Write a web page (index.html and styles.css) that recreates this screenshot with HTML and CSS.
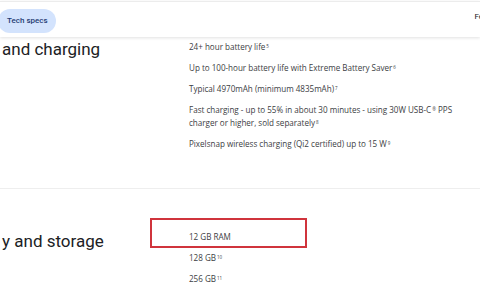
FILE: index.html
```html
<!DOCTYPE html>
<html>
<head>
<meta charset="utf-8">
<link rel="stylesheet" href="styles.css">
</head>
<body>
<header class="topbar">
  <span class="pill">Tech specs</span>
  <span class="nav-cut">Fe</span>
</header>
<main>
  <section class="spec spec-battery">
    <h2 class="spec-title">and charging</h2>
    <ul class="spec-list">
      <li>24+ hour battery life<sup>5</sup></li>
      <li>Up to 100-hour battery life with Extreme Battery Saver<sup>6</sup></li>
      <li>Typical 4970mAh (minimum 4835mAh)<sup>7</sup></li>
      <li>Fast charging - up to 55% in about 30 minutes - using 30W USB-C<sup>®</sup> PPS charger or higher, sold separately<sup>8</sup></li>
      <li>Pixelsnap wireless charging (Qi2 certified) up to 15 W<sup>9</sup></li>
    </ul>
  </section>
  <section class="spec spec-memory">
    <h2 class="spec-title">y and storage</h2>
    <ul class="spec-list">
      <li class="highlight">12 GB RAM</li>
      <li>128 GB<sup>10</sup></li>
      <li>256 GB<sup>11</sup></li>
    </ul>
  </section>
</main>
</body>
</html>
```
FILE: styles.css
```css
* { box-sizing: border-box; }
html, body { margin: 0; padding: 0; background: #fff; }
body {
  width: 480px;
  height: 300px;
  overflow: hidden;
  font-family: "Open Sans", Roboto, Arial, sans-serif;
  color: #3c4043;
}
.topbar {
  height: 36px;
  border-top: 1px solid #ececec;
  margin-top: 1px;
  display: flex;
  align-items: center;
  justify-content: space-between;
  box-shadow: 0 1px 3px rgba(0,0,0,0.12);
  position: relative;
  z-index: 1;
}
.pill {
  background: #d3e3fd;
  color: #1f3b73;
  font-family: Roboto, Arial, sans-serif;
  font-size: 8px;
  font-weight: 500;
  height: 24px;
  display: flex;
  align-items: center;
  padding: 0 8px 0 9px;
  border-radius: 12px;
  margin-left: -2px;
  margin-top: 2px;
}
.nav-cut {
  font-family: Roboto, Arial, sans-serif;
  font-size: 8px;
  color: #202124;
  margin-right: -3px;
  align-self: flex-start;
  margin-top: 10px;
}
.spec {
  display: grid;
  grid-template-columns: 189px 1fr;
}
.spec-battery {
  padding-top: 3px;
  height: 152px;
  border-bottom: 1px solid #eeeeee;
}
.spec-memory {
  padding-top: 41px;
  position: relative;
}
.spec-title {
  margin: 0;
  padding-left: 2px;
  font-family: Roboto, Arial, sans-serif;
  font-size: 17px;
  line-height: 20px;
  font-weight: 400;
  color: #202124;
}
.spec-battery .spec-title { margin-top: -1px; }
.spec-memory .spec-title { margin-top: 1px; }
.spec-list {
  list-style: none;
  margin: 0;
  padding: 0 12px 0 0;
  display: flex;
  flex-direction: column;
  gap: 8px;
  font-size: 8.1px;
  line-height: 13px;
  letter-spacing: -0.02px;
}
.spec-list li { line-height: 13px; }
.spec-list sup {
  font-size: 4.5px;
  vertical-align: baseline;
  position: relative;
  top: -2.5px;
  line-height: 0;
  margin-left: 1px;
}
.highlight { position: relative; }
.highlight::before {
  content: "";
  box-sizing: border-box;
  position: absolute;
  left: -39px;
  top: -12px;
  width: 157px;
  height: 30px;
  border: 2px solid #d0343c;
}
```
